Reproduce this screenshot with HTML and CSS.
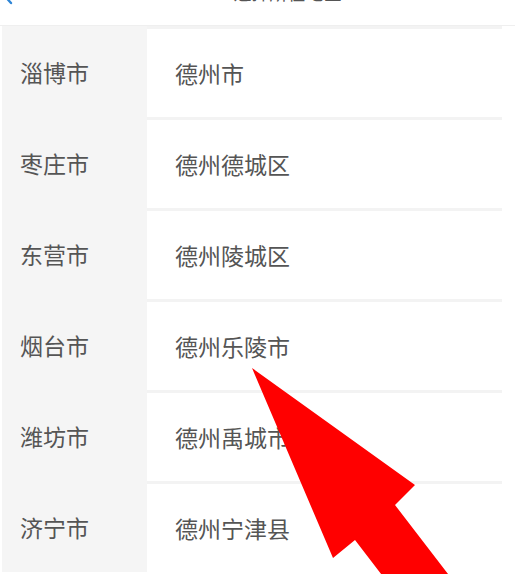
FILE: index.html
```html
<!DOCTYPE html>
<html lang="zh">
<head>
<meta charset="utf-8">
<link rel="stylesheet" href="styles.css">
</head>
<body>
<div class="page">
  <header class="header">
    <svg class="back" width="14" height="22" viewBox="0 0 14 22"><polyline points="11,2 3,11 11,20" fill="none" stroke="#2f86d6" stroke-width="2.4" stroke-linecap="round" stroke-linejoin="round"/></svg>
    <div class="title">选择所在地区</div>
    <div></div>
  </header>
  <main class="picker">
    <ul class="cities">
      <li>淄博市</li>
      <li>枣庄市</li>
      <li>东营市</li>
      <li>烟台市</li>
      <li>潍坊市</li>
      <li>济宁市</li>
    </ul>
    <ul class="districts">
      <li>德州市</li>
      <li>德州德城区</li>
      <li>德州陵城区</li>
      <li>德州乐陵市</li>
      <li>德州禹城市</li>
      <li>德州宁津县</li>
    </ul>
  </main>
  <svg class="arrow" width="515" height="574" viewBox="0 0 515 574"><polygon points="252,368 415,485 395,505 468,600 401,600 355,540 333,558" fill="#ff0000"/></svg>
</div>
</body>
</html>
```
FILE: styles.css
```css
html, body {
  margin: 0;
  padding: 0;
  background: #ffffff;
  overflow: hidden;
}
body {
  font-family: "Noto Sans CJK SC", "Noto Sans", sans-serif;
  color: #555555;
}
.page {
  position: relative;
  width: 515px;
  height: 574px;
  overflow: hidden;
}
.header {
  margin-top: -34px;
  height: 59px;
  border-bottom: 1px solid #efefef;
  display: grid;
  grid-template-columns: 40px 1fr 40px;
  align-items: center;
}
.back {
  margin-bottom: 4px;
}
.title {
  text-align: center;
  font-size: 18px;
  line-height: 53px;
  color: #555555;
  padding-left: 60px;
  margin-bottom: 6px;
}
.picker {
  display: flex;
  padding-left: 2px;
  padding-right: 13px;
}
.cities, .districts {
  list-style: none;
  margin: 0;
  padding: 0;
}
.cities {
  width: 145px;
  background: #f5f5f5;
}
.cities li {
  height: 91px;
  display: flex;
  align-items: center;
  padding-left: 18px;
  font-size: 23px;
}
.districts {
  flex: 1;
}
.districts li {
  height: 88px;
  border-top: 3px solid #f3f3f3;
  display: flex;
  align-items: center;
  padding-left: 28px;
  font-size: 23px;
  background: #ffffff;
}
.arrow {
  position: absolute;
  left: 0;
  top: 0;
  pointer-events: none;
}
```
